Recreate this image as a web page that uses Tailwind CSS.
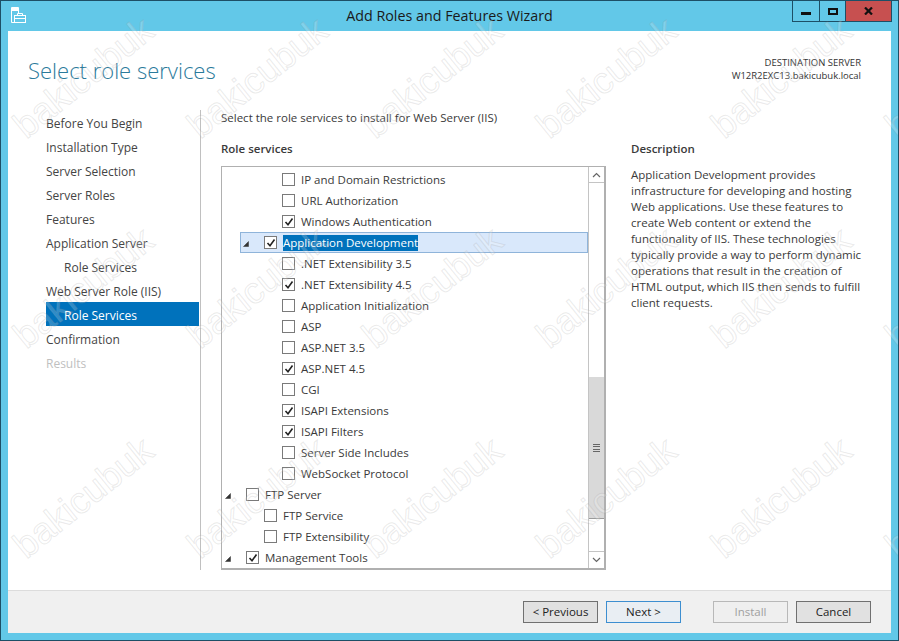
<!DOCTYPE html>
<html lang="en">
<head>
    <meta charset="UTF-8">
    <title>Add Roles and Features Wizard</title>
    <script src="https://cdn.jsdelivr.net/npm/@tailwindcss/browser@4"></script>
</head>
<body class="bg-[#62c8e8]">
<div class="relative w-[899px] h-[641px] overflow-hidden flex flex-col border border-[#1d4f66] bg-[#62c8e8] font-['Open_Sans',sans-serif] text-[11.5px] text-[#3a3a3a]">

    <!-- title bar -->
    <div class="relative h-[30px] shrink-0 flex items-center justify-center text-[14.3px] text-[#1a1a1a]">
        <svg class="absolute left-[10px] top-[6px]" width="16" height="16" viewBox="0 0 16 16" fill="none" stroke="#fff" stroke-width="1">
            <path d="M0.5 15.5V0.5H7.5V6" />
            <path d="M0 2.5H8" stroke-width="3" />
            <path d="M0.5 15.5H3" />
            <rect x="3.5" y="8.5" width="11" height="7" />
            <path d="M6.5 8.5V6.5H11.5V8.5M3.5 11.5H14.5" />
        </svg>
        <span>Add Roles and Features Wizard</span>
        <div class="absolute right-[6px] top-0 flex h-[21px] border border-t-0 border-[#1d4f66]">
            <div class="w-[27px] flex items-center justify-center border-r border-[#1d4f66]"><div class="w-[10px] h-[3px] mt-[5px] bg-[#111]"></div></div>
            <div class="w-[26px] flex items-center justify-center border-r border-[#1d4f66]"><div class="w-[10px] h-[7px] border-2 border-[#111]"></div></div>
            <div class="w-[45px] flex items-center justify-center bg-[#c75050]">
                <svg width="9" height="8" viewBox="0 0 9 8" fill="none" stroke="#111" stroke-width="2.2"><path d="M1 0.5L8 7.5M8 0.5L1 7.5" /></svg>
            </div>
        </div>
    </div>

    <!-- page -->
    <div class="flex-1 mx-[7px] bg-white flex flex-col min-h-0">
        <div class="h-[79px] shrink-0 flex justify-between pl-[20px] pr-[30px]">
            <h1 class="mt-[23px] text-[22px] leading-[32px] font-light text-[#2b7a9b]">Select role services</h1>
            <div class="mt-[25px] text-right text-[9.5px] leading-[13px] text-[#333]">
                <div>DESTINATION SERVER</div>
                <div>W12R2EXC13.bakicubuk.local</div>
            </div>
        </div>

        <div class="flex-1 flex min-h-0">
            <!-- steps -->
            <nav class="w-[153px] ml-[38px] shrink-0 text-[12px] text-[#444]">
                <div class="h-[24px] leading-[27px]">Before You Begin</div>
                <div class="h-[24px] leading-[27px]">Installation Type</div>
                <div class="h-[24px] leading-[27px]">Server Selection</div>
                <div class="h-[24px] leading-[27px]">Server Roles</div>
                <div class="h-[24px] leading-[27px]">Features</div>
                <div class="h-[24px] leading-[27px]">Application Server</div>
                <div class="h-[24px] leading-[27px] pl-[18px]">Role Services</div>
                <div class="h-[24px] leading-[27px]">Web Server Role (IIS)</div>
                <div class="h-[24px] leading-[27px] pl-[18px] bg-[#0072bc] text-white">Role Services</div>
                <div class="h-[24px] leading-[27px]">Confirmation</div>
                <div class="h-[24px] leading-[27px] text-[#c0c0c0]">Results</div>
            </nav>
            <div class="w-px mb-[20px] bg-[#c0c0c0] mr-[20px] ml-px"></div>

            <!-- role services -->
            <div class="w-[385px] shrink-0">
                <p class="leading-[16px]">Select the role services to install for Web Server (IIS)</p>
                <h2 class="mt-[15px] font-semibold leading-[16px]">Role services</h2>
                <div class="mt-[9px] w-[385px] h-[404px] flex border-2 border-[#b0b0b0] border-l border-t overflow-hidden">
                    <div id="rows" class="flex-1 min-w-0 pt-[2px]"></div>
                    <div class="w-[16px] shrink-0 flex flex-col border-l border-[#c4c4c4]">
                        <div class="h-[16px] shrink-0 flex items-center justify-center border-b border-[#c4c4c4]">
                            <svg width="9" height="6" viewBox="0 0 9 6" fill="none" stroke="#666" stroke-width="1.2"><path d="M1 5L4.5 1.5L8 5" /></svg>
                        </div>
                        <div class="h-[194px] shrink-0"></div>
                        <div class="h-[142px] shrink-0 bg-[#d9d9d9] border-b border-[#9a9a9a] flex items-center justify-center">
                            <div class="w-[7px] h-[8px] border-y border-[#666] flex items-center"><div class="w-full h-[4px] border-y border-[#666]"></div></div>
                        </div>
                        <div class="flex-1"></div>
                        <div class="h-[17px] shrink-0 flex items-center justify-center border-t border-[#c4c4c4]">
                            <svg width="9" height="6" viewBox="0 0 9 6" fill="none" stroke="#666" stroke-width="1.2"><path d="M1 1L4.5 4.5L8 1" /></svg>
                        </div>
                    </div>
                </div>
            </div>

            <!-- description -->
            <div class="w-[250px] ml-[25px]">
                <h2 class="mt-[31px] font-semibold leading-[16px]">Description</h2>
                <p class="mt-[10px] leading-[16px] whitespace-nowrap">Application Development provides<br>infrastructure for developing and hosting<br>Web applications. Use these features to<br>create Web content or extend the<br>functionality of IIS. These technologies<br>typically provide a way to perform dynamic<br>operations that result in the creation of<br>HTML output, which IIS then sends to fulfill<br>client requests.</p>
            </div>
        </div>

        <!-- footer -->
        <div class="h-[43px] shrink-0 bg-[#f0f0f0] border-t border-[#dcdcdc] flex items-start pl-[515px] pt-[10px]">
            <button class="w-[75px] h-[22px] bg-[#e1e1e1] border border-[#707070] text-[#222]">&lt; Previous</button>
            <button class="w-[75px] h-[22px] ml-[8px] bg-[#e9eef3] border border-[#3d8ed0] text-[#222]">Next &gt;</button>
            <button class="w-[75px] h-[22px] ml-[32px] bg-[#efefef] border border-[#b8b8b8] text-[#a0a0a0]">Install</button>
            <button class="w-[75px] h-[22px] ml-[8px] bg-[#e1e1e1] border border-[#707070] text-[#222]">Cancel</button>
        </div>
    </div>
    <div class="h-[7px] shrink-0"></div>

    <!-- watermark over everything -->
    <div id="marks" class="absolute left-[-5px] top-[-28px] pointer-events-none grid grid-cols-[repeat(6,174.5px)] grid-rows-[repeat(3,210px)]"></div>
</div>

<script>
    const rowData = [
        ["IP and Domain Restrictions", 3, false],
        ["URL Authorization", 3, false],
        ["Windows Authentication", 3, true],
        ["Application Development", 2, true, "open", "selected"],
        [".NET Extensibility 3.5", 3, false],
        [".NET Extensibility 4.5", 3, true],
        ["Application Initialization", 3, false],
        ["ASP", 3, false],
        ["ASP.NET 3.5", 3, false],
        ["ASP.NET 4.5", 3, true],
        ["CGI", 3, false],
        ["ISAPI Extensions", 3, true],
        ["ISAPI Filters", 3, true],
        ["Server Side Includes", 3, false],
        ["WebSocket Protocol", 3, false],
        ["FTP Server", 1, false, "open"],
        ["FTP Service", 2, false],
        ["FTP Extensibility", 2, false],
        ["Management Tools", 1, true, "open"]
    ];
    const indent = { 1: "pl-[24px]", 2: "pl-[42px]", 3: "pl-[60px]" };
    const check = `<svg class="absolute left-[1px] top-[1px]" width="10" height="10" viewBox="0 0 10 10" fill="none" stroke="#222" stroke-width="1.6"><path d="M1.5 5L4 7.8L8.5 1.5" /></svg>`;
    const arrow = `<path d="M5.5 0.5V5.5H0.5Z" fill="#333" stroke="#333" stroke-width="0.5" />`;

    let html = "";
    for (let r of rowData) {
        const [label, level, checked, open, selected] = r;
        const box = `<span class="relative shrink-0 w-[13px] h-[13px] border border-[#7a7a7a] bg-white">${checked ? check : ""}</span>`;
        if (selected) {
            html += `<div class="relative flex items-center h-[21px] ml-[18px] pl-[23px] bg-[#d9e8fb] border border-[#8fb4da]">
                <svg class="absolute left-[2px] top-[8px]" width="6" height="6" viewBox="0 0 6 6">${arrow}</svg>
                ${box}<span class="ml-[6px] bg-[#0072bc] text-white leading-[16px] whitespace-nowrap">${label}</span></div>`;
        } else {
            const tri = open ? `<svg class="absolute left-[3px] top-[9px]" width="6" height="6" viewBox="0 0 6 6">${arrow}</svg>` : "";
            html += `<div class="relative flex items-center h-[21px] ${indent[level]}">${tri}${box}<span class="ml-[6px] whitespace-nowrap">${label}</span></div>`;
        }
    }
    document.getElementById("rows").innerHTML = html;

    let marks = "";
    for (let i = 0; i < 18; i++) {
        marks += `<div class="flex items-center justify-center"><span class="rotate-[-39deg] text-[37px] font-['Liberation_Sans',sans-serif] text-white/20 [-webkit-text-stroke:1px_rgba(150,150,150,0.2)]">bakicubuk</span></div>`;
    }
    document.getElementById("marks").innerHTML = marks;
</script>
</body>
</html>
